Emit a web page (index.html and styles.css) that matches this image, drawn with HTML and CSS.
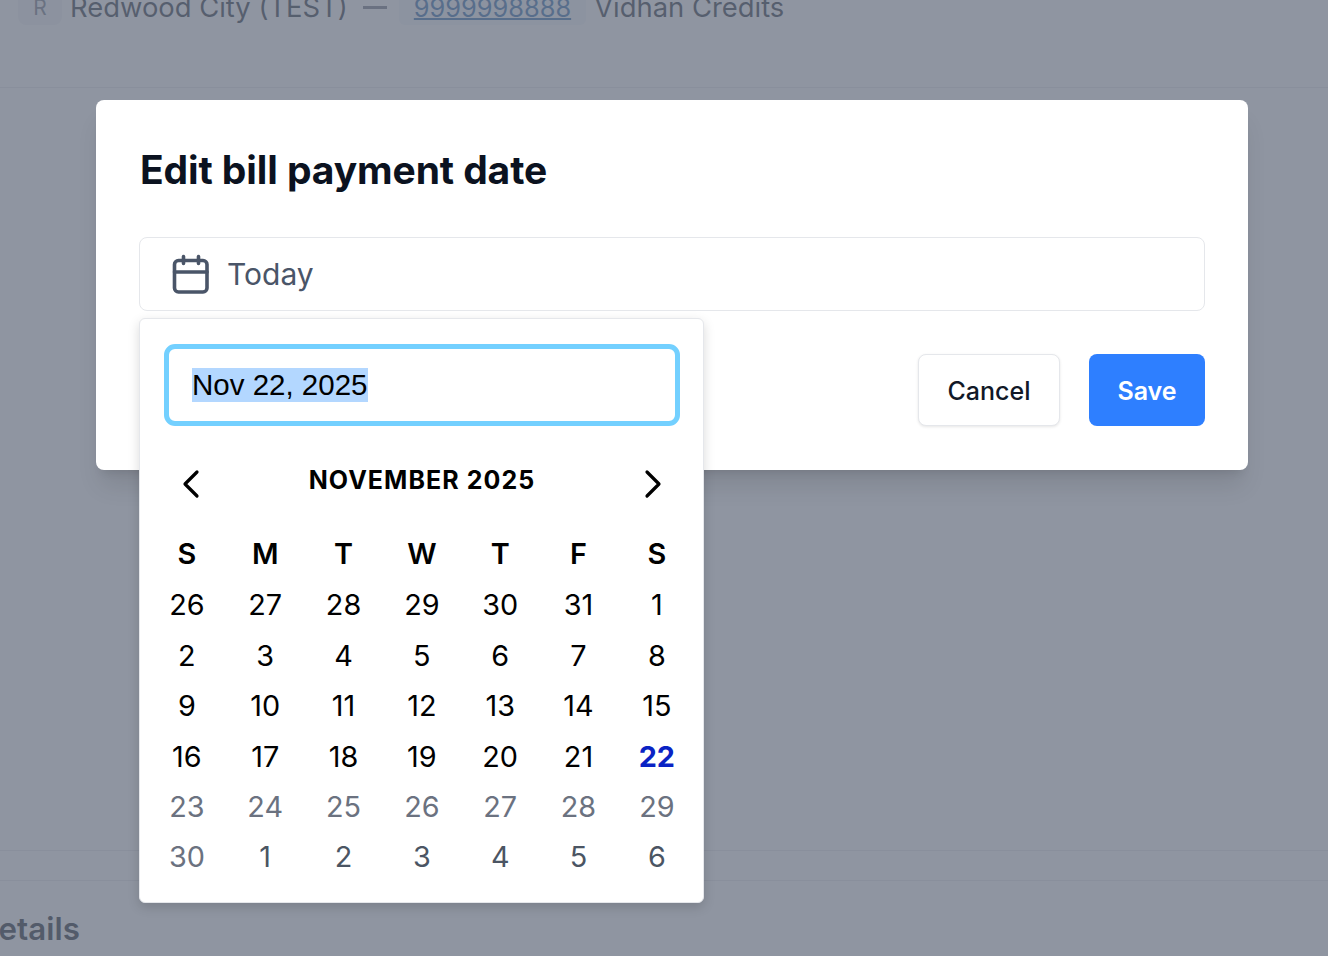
FILE: index.html
```html
<!DOCTYPE html>
<html lang="en">
<head>
<meta charset="utf-8">
<title>Edit bill payment date</title>
<link rel="stylesheet" href="styles.css">
</head>
<body>
<div class="page">
  <header class="topbar">
    <span class="avatar">R</span>
    <span class="org">Redwood City (TEST)</span>
    <span class="dash"></span>
    <span class="phone-chip"><a class="phone">9999998888</a></span>
    <span class="org">Vidhan Credits</span>
  </header>
  <div class="rule rule-top"></div>
  <div class="spacer"></div>
  <div class="rule"></div>
  <div class="rule rule-second"></div>
  <h2 class="details">Bill details</h2>
</div>
<div class="overlay"></div>
<section class="modal">
  <h1 class="title">Edit bill payment date</h1>
  <div class="field">
    <svg class="cal" width="40" height="40" viewBox="0 0 40 40" fill="none" stroke="currentColor" stroke-width="3.6" stroke-linecap="round" stroke-linejoin="round">
      <rect x="3.5" y="6.5" width="32.5" height="31.5" rx="4"/>
      <path d="M3.5 18h32.5M12.5 2.5v7M27.5 2.5v7"/>
    </svg>
    <span class="field-text">Today</span>
  </div>
  <div class="actions">
    <button class="btn btn-cancel">Cancel</button>
    <button class="btn btn-save">Save</button>
  </div>
</section>
<div class="popover">
  <div class="date-input"><span class="selected">Nov 22, 2025</span></div>
  <div class="month-row">
    <svg class="chev" width="24" height="30" viewBox="0 0 24 30" fill="none" stroke="currentColor" stroke-width="3.2" stroke-linecap="round" stroke-linejoin="round"><path d="M18 3 6 15l12 12"/></svg>
    <span class="month">NOVEMBER 2025</span>
    <svg class="chev" width="24" height="30" viewBox="0 0 24 30" fill="none" stroke="currentColor" stroke-width="3.2" stroke-linecap="round" stroke-linejoin="round"><path d="m6 3 12 12L6 27"/></svg>
  </div>
  <div class="grid">
    <span class="dow">S</span><span class="dow">M</span><span class="dow">T</span><span class="dow">W</span><span class="dow">T</span><span class="dow">F</span><span class="dow">S</span>
    <span>26</span><span>27</span><span>28</span><span>29</span><span>30</span><span>31</span><span>1</span>
    <span>2</span><span>3</span><span>4</span><span>5</span><span>6</span><span>7</span><span>8</span>
    <span>9</span><span>10</span><span>11</span><span>12</span><span>13</span><span>14</span><span>15</span>
    <span>16</span><span>17</span><span>18</span><span>19</span><span>20</span><span>21</span><span class="today">22</span>
    <span class="future">23</span><span class="future">24</span><span class="future">25</span><span class="future">26</span><span class="future">27</span><span class="future">28</span><span class="future">29</span>
    <span class="future">30</span><span class="next">1</span><span class="next">2</span><span class="next">3</span><span class="next">4</span><span class="next">5</span><span class="next">6</span>
  </div>
</div>
</body>
</html>
```

FILE: styles.css
```css
* { box-sizing: border-box; }
html, body { margin: 0; height: 100%; }
body {
  position: relative;
  width: 1328px;
  height: 956px;
  overflow: hidden;
  background: #fff;
  font-family: Inter, "Liberation Sans", sans-serif;
  color: #111827;
}
.page { display: flex; flex-direction: column; height: 100%; }
.topbar {
  display: flex;
  align-items: center;
  height: 44px;
  margin-top: -15px;
  padding-left: 18px;
  flex: none;
  font-size: 27.4px;
  color: #1f2937;
}
.avatar {
  width: 44px;
  height: 36px;
  border-radius: 8px;
  background: #f3f4f6;
  color: #6b7280;
  font-size: 21px;
  display: flex;
  align-items: center;
  justify-content: center;
  margin-right: 8px;
}
.dash { width: 24px; height: 3px; background: #6b7280; margin: 0 12px 0 15px; }
.phone-chip {
  display: flex;
  align-items: center;
  height: 36px;
  padding: 0 15px;
  margin-right: 8px;
  background: #f3f6fb;
  border-radius: 6px;
  font-size: 25.4px;
}
.phone { color: #2563a8; text-decoration: underline; text-decoration-thickness: 2px; }
.rule { height: 1px; background: #e5e7eb; flex: none; }
.rule-top { margin-top: 58px; }
.spacer { height: 762px; flex: none; }
.rule-second { margin-top: 29px; }
.details {
  margin: 30px 0 0 -74px;
  font-size: 31.3px;
  font-weight: 600;
  color: #111827;
  line-height: 1.2;
  white-space: nowrap;
}
.overlay { position: absolute; inset: 0; background: rgba(105, 113, 129, .75); }
.modal {
  position: absolute;
  left: 96px;
  top: 100px;
  width: 1152px;
  height: 370px;
  padding: 44px 43px 44px 43px;
  background: #fff;
  border-radius: 8px;
  box-shadow: 0 20px 25px -5px rgba(0,0,0,.1), 0 8px 10px -6px rgba(0,0,0,.1);
  display: flex;
  flex-direction: column;
}
.title {
  margin: 0 0 0 1px;
  font-size: 39px;
  line-height: 52px;
  font-weight: 700;
  letter-spacing: -.1px;
  color: #0b1220;
}
.field {
  display: flex;
  align-items: center;
  gap: 16px;
  height: 74px;
  margin-top: 41px;
  padding-left: 31px;
  border: 1px solid #e5e7eb;
  border-radius: 8px;
  color: #4a5568;
}
.cal { flex: none; }
.field-text { font-size: 30px; }
.actions { display: flex; justify-content: flex-end; gap: 29px; margin-top: 43px; }
.btn {
  height: 72px;
  padding: 2px 0 0;
  border-radius: 8px;
  font: 600 25px Inter, "Liberation Sans", sans-serif;
  cursor: pointer;
}
.btn-cancel {
  width: 142px;
  background: #fff;
  border: 1px solid #e5e7eb;
  color: #111827;
  box-shadow: 0 1px 3px rgba(0,0,0,.1);
  font-weight: 500;
}
.btn-save { width: 116px; background: #2e7fff; border: 0; color: #fff; }
.popover {
  position: absolute;
  left: 139px;
  top: 318px;
  width: 565px;
  height: 585px;
  padding: 25px 8px 0;
  background: #fff;
  border: 1px solid #e5e7eb;
  border-radius: 6px;
  box-shadow: 0 4px 12px rgba(0,0,0,.15);
}
.date-input {
  display: flex;
  align-items: center;
  width: 516px;
  height: 82px;
  margin-left: 16px;
  padding-left: 23px;
  border: 5px solid #73d0ff;
  border-radius: 11px;
  font: 29.5px "Liberation Sans", sans-serif;
  color: #000;
}
.selected { background: #b3d7ff; line-height: 34px; }
.month-row {
  display: flex;
  justify-content: space-between;
  align-items: flex-start;
  margin-top: 40px;
  padding: 2px 30px 0 31px;
  color: #000;
}
.chev { flex: none; margin-top: 1px; }
.month { font-size: 25px; line-height: 30px; font-weight: 700; letter-spacing: 1.05px; margin-top: -3px; }
.grid {
  display: grid;
  grid-template-columns: repeat(7, 78.33px);
  grid-template-rows: 51.6px;
  grid-auto-rows: 50.4px;
  margin-top: 29.8px;
  margin-left: -.3px;
  font-size: 28.8px;
  color: #000;
  text-align: center;
  line-height: 50.4px;
}
.dow { font-weight: 600; }
.today { color: #0a23c4; font-weight: 700; }
.future { color: #6b7280; }
.next { color: #4b5563; }
```
